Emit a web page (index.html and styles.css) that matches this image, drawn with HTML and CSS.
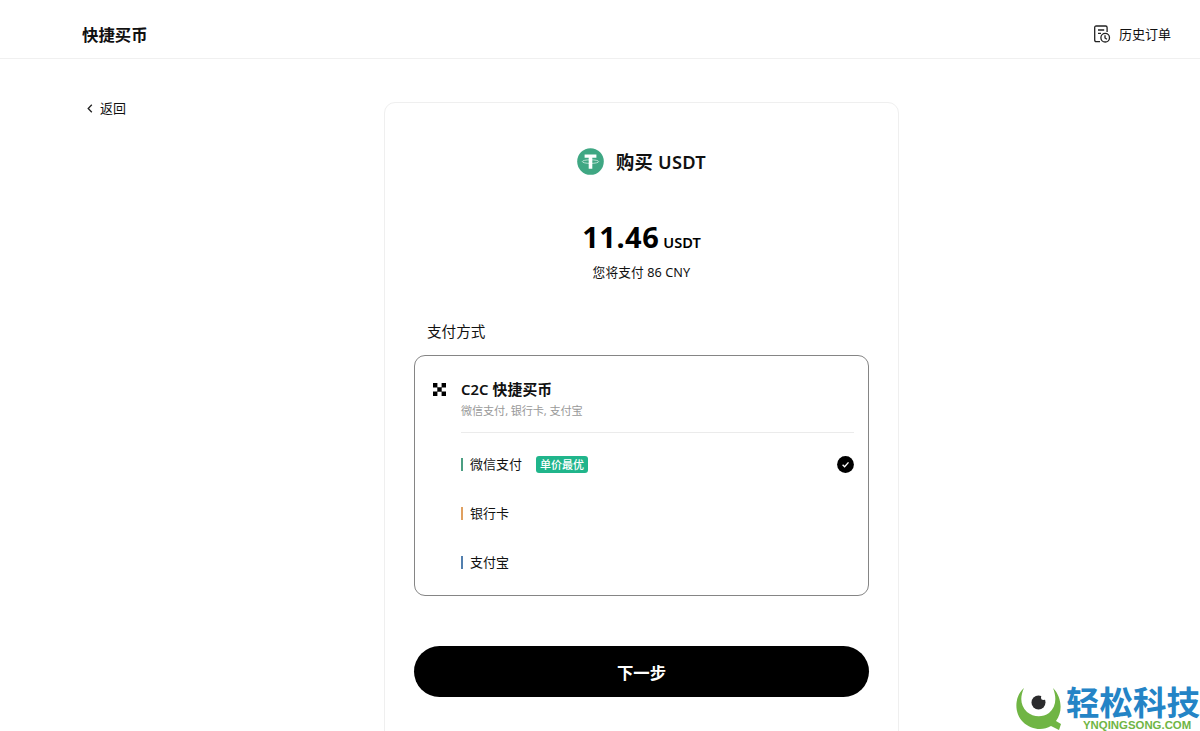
FILE: index.html
```html
<!DOCTYPE html>
<html lang="zh-CN">
<head>
<meta charset="utf-8">
<title>快捷买币</title>
<link rel="stylesheet" href="styles.css">
</head>
<body>
<div class="page">
  <header class="header">
    <h1 class="header-title">快捷买币</h1>
    <a class="history">
      <svg class="history-icon" width="18" height="18" viewBox="0 0 18 18" fill="none" stroke="#222" stroke-width="1.3">
        <path d="M7 16.6H3.2Q1.7 16.6 1.7 15.1V2.5Q1.7 1 3.2 1H12.6Q14.1 1 14.1 2.5V7M5 5h6.2M5 8.4h3"/>
        <circle cx="12.2" cy="12.7" r="4.3"/>
        <path d="M12 10.3v2.7l1.9 1.3"/>
      </svg>
      <span>历史订单</span>
    </a>
  </header>
  <main class="main">
    <a class="back">
      <svg width="6" height="9" viewBox="0 0 6 9" fill="none" stroke="#222" stroke-width="1.3"><path d="M4.8.7 1.2 4.5l3.6 3.8"/></svg>
      <span>返回</span>
    </a>
    <section class="card">
      <div class="coin">
        <svg width="27" height="27" viewBox="0 0 27 27">
          <circle cx="13.5" cy="13.5" r="13.3" fill="#3fa783"/>
          <ellipse cx="13.5" cy="13.6" rx="8.2" ry="1.8" fill="none" stroke="#d3eee3" stroke-width=".8"/>
          <path d="M7.6 6.5h11.8v3.2h-4.1v11h-3.6v-11H7.600z" fill="#fff"/>
        </svg>
        <h2 class="coin-title">购买 USDT</h2>
      </div>
      <div class="amount"><span class="amount-value">11.46</span><span class="amount-unit">USDT</span></div>
      <div class="pay">您将支付 86 CNY</div>
      <div class="label">支付方式</div>
      <div class="methods">
        <svg class="c2c-icon" width="13" height="13" viewBox="0 0 13 13" fill="#000">
          <path d="M0 0h4.4v4.4H0zM8.6 0H13v4.4H8.6zM4.3 4.3h4.4v4.4H4.3zM0 8.6h4.4V13H0zM8.6 8.6H13V13H8.6z"/>
        </svg>
        <div class="methods-body">
          <h3 class="methods-title">C2C 快捷买币</h3>
          <p class="methods-note">微信支付, 银行卡, 支付宝</p>
          <ul class="options">
            <li class="option wechat"><span>微信支付</span><b class="tag">单价最优</b>
              <svg class="check" width="17" height="17" viewBox="0 0 17 17"><circle cx="8.5" cy="8.5" r="8.4"/><path d="m5.6 8.8 2 1.9 3.9-4.3" fill="none" stroke="#fff" stroke-width="1.4"/></svg>
            </li>
            <li class="option bank"><span>银行卡</span></li>
            <li class="option alipay"><span>支付宝</span></li>
          </ul>
        </div>
      </div>
      <button class="next">下一步</button>
    </section>
  </main>
  <div class="watermark">
    <svg width="46" height="46" viewBox="0 0 46 46">
      <path d="M8 3C-2 12-2 28 7 37c8 8 20 9 28 4l8 4 2-6-5-3c7-9 6-24-3-33 4 10 3 19-4 25-7 5-16 4-22-1C4 20 4 12 8 3z" fill="#70b544"/>
      <circle cx="22.500" cy="17.5" r="7" fill="#2b2b2d"/>
      <circle cx="27.500" cy="12.5" r="2.500" fill="#fff"/>
    </svg>
    <div class="watermark-text">
      <div class="watermark-name">轻松科技</div>
      <div class="watermark-url">YNQINGSONG.COM</div>
    </div>
  </div>
</div>
</body>
</html>
```
FILE: styles.css
```css
* { box-sizing: border-box; margin: 0; padding: 0; }
body {
  background: #fff;
  color: #111;
  font-family: "Noto Sans", "Noto Sans CJK SC", sans-serif;
  font-size: 13px;
}
svg { display: block; flex: none; }
.page { position: relative; height: 731px; overflow: hidden; }
.header {
  display: flex;
  align-items: center;
  justify-content: space-between;
  height: 59px;
  padding: 10px 29px 0 82px;
  border-bottom: 1px solid #f0f0f0;
}
.header-title { padding-top: 1px; font-size: 16.4px; line-height: 24px; font-weight: 700; }
.history { display: flex; align-items: center; gap: 8px; line-height: 20px; }
.main { display: flex; align-items: flex-start; padding: 43px 0 0 87px; }
.back {
  display: flex;
  align-items: center;
  gap: 7px;
  width: 297px;
  height: 13px;
  line-height: 13px;
}
.card {
  width: 515px;
  height: 700px;
  padding: 43px 29px 0;
  border: 1px solid #efefef;
  border-radius: 11px;
}
.coin { display: flex; align-items: center; justify-content: center; gap: 12px; height: 30px; }
.coin-title { padding-top: 1px; font-size: 18.3px; line-height: 28px; font-weight: 600; letter-spacing: .25px; }
.amount {
  display: flex;
  align-items: baseline;
  justify-content: center;
  gap: 4px;
  height: 44px;
  margin-top: 39px;
  line-height: 44px;
  color: #000;
}
.amount-value { font-size: 29px; font-weight: 700; letter-spacing: .5px; }
.amount-unit { font-size: 14.6px; font-weight: 600; }
.pay { margin-top: 3px; font-size: 12.7px; line-height: 20px; letter-spacing: .1px; text-align: center; }
.label { margin: 38px 0 0 13px; font-size: 14.6px; line-height: 22px; }
.methods {
  display: flex;
  gap: 15px;
  height: 241px;
  margin-top: 13px;
  padding: 22px 14px 0 18px;
  border: 1px solid #858585;
  border-radius: 11px;
}
.c2c-icon { margin-top: 5px; }
.methods-body { flex: 1; }
.methods-title { font-size: 14.8px; line-height: 22px; font-weight: 600; letter-spacing: .1px; }
.methods-note { padding-top: 1px; font-size: 11.2px; line-height: 20px; letter-spacing: -.15px; color: #999; }
.options {
  margin-top: 11px;
  padding-top: 7px;
  border-top: 1px solid #ebebeb;
  list-style: none;
}
.option { display: flex; align-items: center; height: 49.2px; }
.option > span { padding-bottom: 2px; }
.option::before { content: ""; width: 2px; height: 13px; margin-right: 7px; }
.wechat::before { background: #4b9e82; }
.bank::before { background: #e0a060; }
.alipay::before { background: #527fae; }
.tag {
  margin-left: 14px;
  padding: 0 4px;
  border-radius: 3px;
  background: #20b58b;
  color: #fff;
  font-size: 11px;
  line-height: 17px;
  font-weight: 500;
}
.check { margin-left: auto; }
.next {
  display: block;
  width: 455px;
  height: 51px;
  margin-top: 50px;
  border: 0;
  border-radius: 26px;
  background: #000;
  color: #fff;
  font: 700 16.4px/51px "Noto Sans", "Noto Sans CJK SC", sans-serif;
  padding-top: 1px;
}
.watermark {
  position: absolute;
  right: 0;
  bottom: 0;
  display: flex;
  gap: 4px;
  width: 184px;
  height: 46px;
}
.watermark-text { white-space: nowrap; }
.watermark-name {
  color: #2484c6;
  font-size: 33.5px;
  line-height: 34px;
  font-weight: 700;
}
.watermark-url {
  padding: 1px 0 0 17px;
  color: #70b544;
  font: 700 11.4px/11px "Liberation Sans", sans-serif;
}
```
